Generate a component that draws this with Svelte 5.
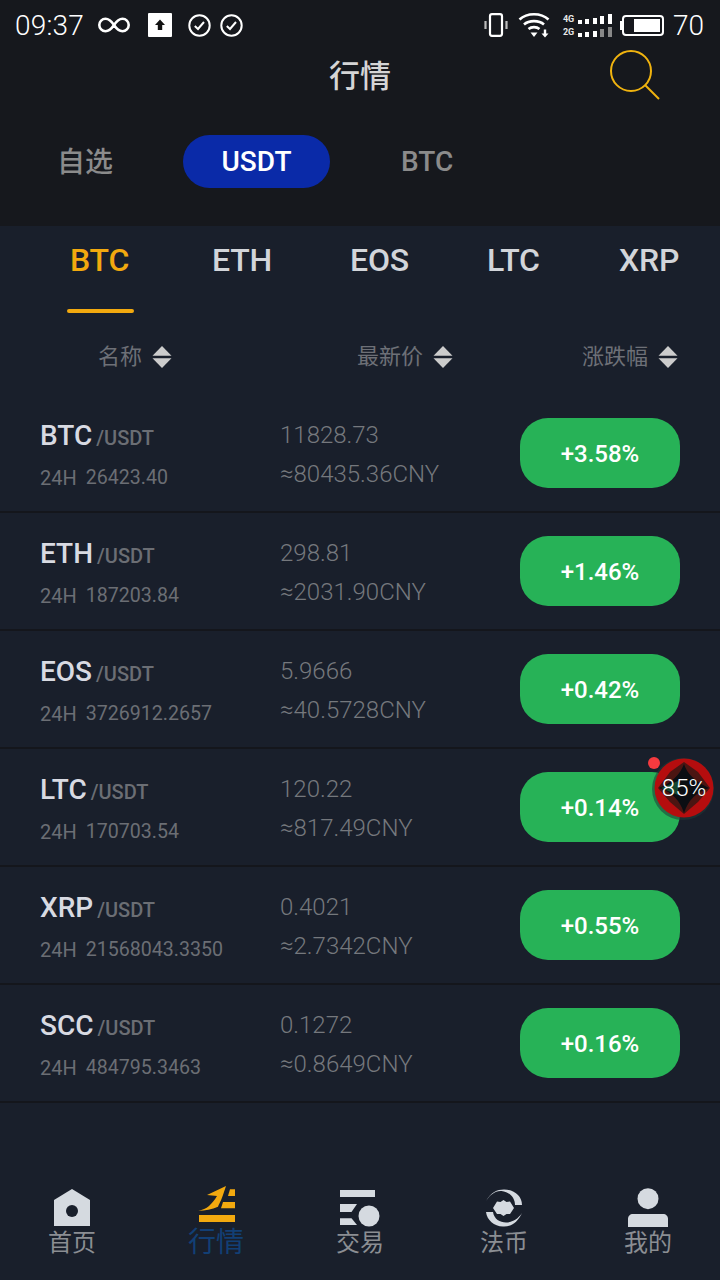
<script>
  const rows = [
    { c: 'BTC', vol: '26423.40', p: '11828.73', cny: '≈80435.36CNY', ch: '+3.58%' },
    { c: 'ETH', vol: '187203.84', p: '298.81', cny: '≈2031.90CNY', ch: '+1.46%' },
    { c: 'EOS', vol: '3726912.2657', p: '5.9666', cny: '≈40.5728CNY', ch: '+0.42%' },
    { c: 'LTC', vol: '170703.54', p: '120.22', cny: '≈817.49CNY', ch: '+0.14%' },
    { c: 'XRP', vol: '21568043.3350', p: '0.4021', cny: '≈2.7342CNY', ch: '+0.55%' },
    { c: 'SCC', vol: '484795.3463', p: '0.1272', cny: '≈0.8649CNY', ch: '+0.16%' }
  ];
  const coins = ['BTC', 'ETH', 'EOS', 'LTC', 'XRP'];
  const heads = [['名称', 'h1'], ['最新价', 'h2'], ['涨跌幅', 'h3']];
</script>

<div class="page">
  <header class="top">
    <div class="status">
      <div class="st-left">
        <span class="time">09:37</span>
        <svg class="inf" width="34" height="18" viewBox="0 0 34 18" fill="none" stroke="#fff" stroke-width="2.6"><path d="M17 9C14 4.500 11.500 2.800 8.500 2.800A6.200 6.200 0 0 0 8.500 15.200C11.500 15.200 14 13.500 17 9C20 4.500 22.500 2.800 25.500 2.800A6.200 6.200 0 0 1 25.500 15.200C22.500 15.200 20 13.500 17 9Z"/></svg>
        <svg class="up" width="24" height="24" viewBox="0 0 24 24"><rect width="24" height="24" rx="1" fill="#fff"/><path d="M12 6.500L17 12H14.200V17H9.800V12H7Z" fill="#111"/></svg>
        <svg class="chk" width="23" height="23" viewBox="0 0 23 23" fill="none" stroke="#fff" stroke-width="2"><circle cx="11.500" cy="11.500" r="10.200"/><path d="M6.800 12L10 15L16 8"/></svg>
        <svg class="chk2" width="23" height="23" viewBox="0 0 23 23" fill="none" stroke="#fff" stroke-width="2"><circle cx="11.500" cy="11.500" r="10.200"/><path d="M6.800 12L10 15L16 8"/></svg>
      </div>
      <div class="st-right">
        <svg class="vib" width="24" height="24" viewBox="0 0 24 24" fill="none" stroke="#fff"><rect x="6" y="1.200" width="12" height="21.600" rx="2" stroke-width="2.200"/><path d="M1.500 8V16M22.500 8V16" stroke-width="2.200" stroke="#bbb"/></svg>
        <svg class="wifi" width="34" height="26" viewBox="0 0 34 26" fill="none" stroke="#fff" stroke-width="2.600"><path d="M1.500 7.500C9 0.500 23 0.500 30.500 7.500"/><path d="M6 12.500C11 8 21 8 26 12.500"/><path d="M10.500 17C13.500 14.500 18.500 14.500 21.500 17"/><path d="M12.500 20.500H19.500L16 25Z" fill="#fff" stroke="none"/><path d="M27 17.500V22" stroke-width="2.400"/><path d="M23.500 21.500H30.500L27 25.500Z" fill="#fff" stroke="none"/></svg>
        <div class="sig">
          <div class="sigrow"><span class="net">4G</span><i class="b1"></i><i class="b2"></i><i class="b3"></i><i class="b4"></i><i class="b5"></i></div>
          <div class="sigrow"><span class="net">2G</span><i class="b1"></i><i class="b2"></i><i class="b3"></i><i class="b4 dim"></i><i class="b5 dim"></i></div>
        </div>
        <div class="batt"><div class="fill"></div></div>
        <span class="pct">70</span>
      </div>
    </div>
    <div class="titlebar">
      <h1>行情</h1>
      <svg class="search" width="52" height="52" viewBox="0 0 52 52" fill="none" stroke="#f0b30f" stroke-width="2"><circle cx="23" cy="21" r="20"/><path d="M37 35L51 49"/></svg>
    </div>
    <nav class="market">
      <span class="m m1">自选</span>
      <span class="m m2">USDT</span>
      <span class="m m3">BTC</span>
    </nav>
  </header>

  <main class="body">
    <div class="coins">
      {#each coins as c, i}
        <div class="coin coin{i}" class:on={i === 0}>{c}</div>
      {/each}
    </div>
    <div class="heads">
      {#each heads as h}
        <div class="head {h[1]}">
          <span>{h[0]}</span>
          <svg width="20" height="24" viewBox="0 0 20 24" fill="#ccc"><path d="M10 1L19.500 10.800H0.500Z"/><path d="M10 23L19.500 13.200H0.500Z"/></svg>
        </div>
      {/each}
    </div>
    <div class="list">
      {#each rows as r}
        <div class="row">
          <div class="col-a">
            <div class="name"><b>{r.c}</b><span>/USDT</span></div>
            <div class="vol"><span>24H</span><span class="num">{r.vol}</span></div>
          </div>
          <div class="col-b">
            <div class="price">{r.p}</div>
            <div class="cny">{r.cny}</div>
          </div>
          <div class="chg">{r.ch}</div>
        </div>
      {/each}
    </div>
  </main>

  <footer class="tabs">
    <div class="tab">
      <svg width="38" height="44" viewBox="0 0 38 44"><path d="M1 17L19 6L37 17V43H1Z" fill="#d5dae0"/><circle cx="19" cy="28" r="6" fill="#191f2b"/></svg>
      <span>首页</span>
    </div>
    <div class="tab on">
      <svg width="38" height="44" viewBox="0 0 38 44" fill="#f2a90f"><path d="M1.300 27.700C10 26.500 15 21 20 13L10 12L29 3C28 6 27 9 26 12C24 18 22 21 21 23.700C15 26.500 8 27.500 1.300 27.700Z"/><path d="M33 6.300H38V13H31Z"/><path d="M26 19H38V25.300H24Z"/><rect x="2" y="32" width="36" height="7"/></svg>
      <span>行情</span>
    </div>
    <div class="tab">
      <svg width="42" height="44" viewBox="0 0 42 44" fill="#d5dae0"><rect x="1" y="7" width="35" height="7"/><path d="M1 21H18L12.500 29H1Z"/><path d="M1 35.300H12.500L18 42H1Z"/><circle cx="30" cy="33" r="10.500"/></svg>
      <span>交易</span>
    </div>
    <div class="tab">
      <svg width="38" height="44" viewBox="0 0 38 44" fill="#d5dae0"><path d="M1 18C6 9 12 6.500 19 6.500C29 6.500 37 13 37 22L30 22C30 15 25 9 16.500 8C10 7.500 5 12 1 18Z"/><path d="M1 29L8 29C9 36 15 39.500 21 39.500C27 39.500 33 36 37 30C33 39 26 44 18 43.500C9 43.500 2 37 1 29Z"/><path d="M18.500 17L21.500 19L25 18.500L29 25L25 31L21.500 31L18.500 33L15.500 31L12 31L8 25L12 18.500L15.500 19Z"/></svg>
      <span>法币</span>
    </div>
    <div class="tab">
      <svg width="40" height="44" viewBox="0 0 40 44" fill="#d5dae0"><circle cx="20" cy="15.700" r="10.500"/><path d="M0 44V36C0 33 2 31 5 31H35C38 31 40 33 40 36V44Z"/></svg>
      <span>我的</span>
    </div>
  </footer>

  <div class="ball">
    <i class="dot"></i>
    <svg width="64" height="64" viewBox="0 0 64 64" fill="none"><circle cx="31" cy="33" r="31" fill="#1f3b38" opacity="0.55"/><circle cx="32" cy="32" r="29.500" fill="#b50d0e"/><path d="M32 6L46 16L58 32L46 46L32 58L18 46L6 32L18 16Z" fill="#4b1512"/><path d="M32 8Q36 22 57 32Q38 38 32 57Q26 38 7 32Q26 24 32 8Z" fill="#0b0e13"/><path d="M9 32L26 25V39Z" fill="#15472f"/></svg>
    <span>85%</span>
  </div>
</div>

<style>
  :global(body) { margin: 0; background: #191f2b; }
  .page { position: relative; width: 720px; height: 1280px; overflow: hidden; display: flex; flex-direction: column; font-family: Roboto, "Noto Sans CJK SC", sans-serif; }
  .top { height: 226px; background: #16181d; flex: none; }
  .status { height: 50px; display: flex; justify-content: space-between; align-items: center; color: #fff; }
  .st-left { display: flex; align-items: center; padding-left: 15px; }
  .time { font-size: 28px; font-weight: 300; letter-spacing: 0.2px; }
  .inf { margin-left: 13px; }
  .up { margin-left: 17px; }
  .chk { margin-left: 16px; }
  .chk2 { margin-left: 9px; }
  .st-right { display: flex; align-items: center; padding-right: 16px; }
  .vib { margin-right: -1px; }
  .wifi { margin-left: 11px; }
  .sig { margin-left: 11px; display: flex; flex-direction: column; gap: 3px; }
  .sigrow { display: flex; align-items: flex-end; gap: 3.500px; height: 10px; }
  .net { font-size: 9px; font-weight: 700; line-height: 10px; width: 11px; margin-right: 0.500px; color: #e8e8e8; }
  .sigrow i { display: block; width: 4px; background: #fff; }
  .b1 { height: 4px; } .b2 { height: 5px; } .b3 { height: 6px; } .b4 { height: 8px; } .b5 { height: 10px; }
  .sigrow i.dim { background: #888; }
  .batt { margin-left: 10px; width: 42px; height: 21px; box-sizing: border-box; border: 2px solid #fff; border-radius: 4px; position: relative; display: flex; align-items: center; justify-content: flex-end; padding-right: 2px; }
  .batt::before { content: ''; position: absolute; left: -4px; top: 4px; width: 2px; height: 9px; background: #fff; }
  .fill { width: 26px; height: 13px; background: #fff; }
  .pct { margin-left: 9px; font-size: 28px; font-weight: 300; }
  .titlebar { position: relative; height: 50px; display: flex; justify-content: center; align-items: center; }
  h1 { margin: -4px 0 0; font-size: 31px; font-weight: 500; color: #d5d5d5; }
  .search { position: absolute; left: 608px; top: 0; }
  .market { display: flex; align-items: center; padding-top: 35px; }
  .m { font-weight: 500; font-size: 28px; color: #8b8b8b; }
  .m1 { margin-left: 57px; margin-top: -3px; }
  .m2 { margin-left: 70px; width: 147px; height: 53px; line-height: 53px; border-radius: 27px; text-align: center; background: #0a2aa8; color: #fff; }
  .m3 { margin-left: 71px; }
  .body { flex: 1; background: #191f2b; }
  .coins { position: relative; height: 96px; }
  .coin { position: absolute; top: 14px; font-size: 32px; font-weight: 500; color: #d2d5da; line-height: 40px; letter-spacing: -0.200px; }
  .coin0 { left: 70px; } .coin1 { left: 212px; } .coin2 { left: 350px; } .coin3 { left: 487px; } .coin4 { left: 619px; }
  .coin.on { color: #f2a90f; }
  .coin.on::after { content: ''; position: absolute; left: -3px; right: -5px; top: 69px; height: 4px; border-radius: 2px; background: #f2a90f; }
  .heads { position: relative; height: 73px; }
  .head { position: absolute; top: 20px; display: flex; align-items: center; gap: 10px; font-size: 22px; color: #6d7077; line-height: 30px; }
  .h1 { left: 98px; } .h2 { left: 357px; } .h3 { left: 582px; }
  .list { display: flex; flex-direction: column; }
  .row { height: 116px; border-bottom: 2px solid #14161c; display: flex; align-items: center; position: relative; }
  .col-a { width: 280px; padding: 4px 0 0 40px; box-sizing: border-box; }
  .name { height: 46px; display: flex; align-items: baseline; line-height: 40px; }
  .name b { font-size: 28px; font-weight: 500; color: #d8dae2; }
  .name span { font-size: 20px; font-weight: 500; color: #6b6e74; margin-left: 4px; }
  .vol { font-size: 20px; color: #6b6e74; display: flex; gap: 9px; line-height: 32px; }
  .num { font-size: 19.600px; }
  .col-b { width: 240px; padding-top: 4px; font-size: 24px; font-weight: 300; color: #75787d; line-height: 39px; }
  .chg { width: 160px; height: 70px; line-height: 72px; border-radius: 28px; background: #27b257; color: #fff; text-align: center; font-size: 24px; font-weight: 500; }
  .tabs { flex: none; height: 104px; display: flex; }
  .tab { width: 144px; display: flex; flex-direction: column; align-items: center; font-size: 24px; color: #8b8e93; }
  .tab svg { margin-top: 7px; display: block; }
  .tab span { line-height: 32px; }
  .tab.on span { color: #123f75; font-size: 28px; }
  .ball { position: absolute; left: 652px; top: 756px; width: 64px; height: 64px; display: flex; align-items: center; justify-content: center; color: #fff; font-size: 24px; font-weight: 300; }
  .ball svg { position: absolute; inset: 0; overflow: visible; }
  .ball span { position: relative; }
  .dot { position: absolute; left: -4px; top: 1px; width: 12px; height: 12px; border-radius: 50%; background: #f53a3f; z-index: 1; }
</style>
